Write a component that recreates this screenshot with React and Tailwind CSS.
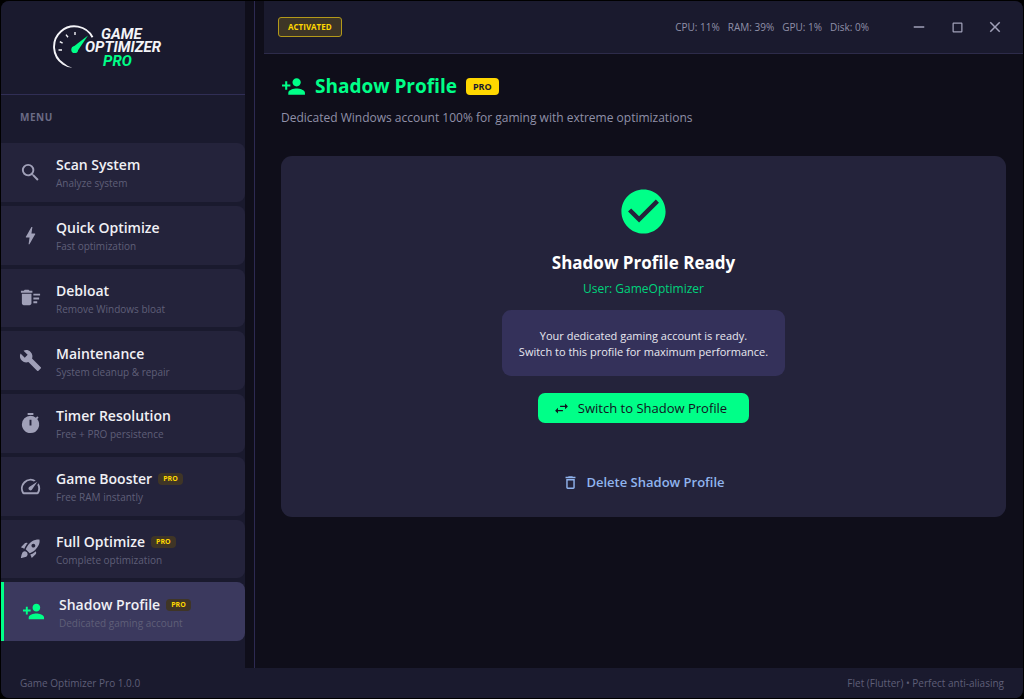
import React from 'react';
import {
    MdBolt,
    MdBuild,
    MdCheckCircle,
    MdClose,
    MdCropSquare,
    MdDeleteOutline,
    MdDeleteSweep,
    MdPersonAdd,
    MdRemove,
    MdRocketLaunch,
    MdSearch,
    MdSpeed,
    MdSwapHoriz,
    MdTimer,
} from 'react-icons/md';

const MENU_ITEMS = [
    { id: 'scan', icon: MdSearch, title: 'Scan System', subtitle: 'Analyze system' },
    { id: 'quick', icon: MdBolt, title: 'Quick Optimize', subtitle: 'Fast optimization' },
    { id: 'debloat', icon: MdDeleteSweep, title: 'Debloat', subtitle: 'Remove Windows bloat' },
    { id: 'maintenance', icon: MdBuild, title: 'Maintenance', subtitle: 'System cleanup & repair' },
    { id: 'timer', icon: MdTimer, title: 'Timer Resolution', subtitle: 'Free + PRO persistence' },
    { id: 'booster', icon: MdSpeed, title: 'Game Booster', subtitle: 'Free RAM instantly', pro: true },
    { id: 'full', icon: MdRocketLaunch, title: 'Full Optimize', subtitle: 'Complete optimization', pro: true },
    { id: 'shadow', icon: MdPersonAdd, title: 'Shadow Profile', subtitle: 'Dedicated gaming account', pro: true },
];

const STATS = ['CPU: 11%', 'RAM: 39%', 'GPU: 1%', 'Disk: 0%'];

function Logo() {
    return (
        <svg viewBox="0 0 114 48" className="w-[114px] h-12" role="img" aria-label="Game Optimizer Pro">
            {/* gauge ring, thinner in its last stretch */}
            <path d="M40.5 13.2 A20.4 20.4 0 1 0 11 39.6" fill="none" stroke="#f4f4f8" strokeWidth="1.9" />
            <path d="M10.4 40.4 A21.3 21.3 0 0 0 20.5 43.8 A20 20 0 0 1 11.5 38.8 Z" fill="#f4f4f8" />
            <path d="M6.5 26 H10 M7.8 17.6 L10.6 19.2 M14 10.6 L16 13.2 M23 8 V11" stroke="#f4f4f8" strokeWidth="1.4" />
            <path d="M36 11.5 L25.5 27 L21 23 Z" fill="#00ff88" />
            <circle cx="22.7" cy="25.7" r="3.4" fill="#00ff88" />
            <g fontFamily="Roboto, sans-serif" fontWeight="700" fontStyle="italic" fontSize="15">
                <text x="49" y="14.5" fill="#f4f4f8">GAME</text>
                <text x="33" y="28" fill="#f4f4f8">OPTIMIZER</text>
                <text x="51" y="42" fill="#00ff88">PRO</text>
            </g>
        </svg>
    );
}

function MenuItem({ item, active, onSelect }) {
    const Icon = item.icon;
    return (
        <button
            onClick={() => onSelect(item.id)}
            className={`flex flex-1 items-center gap-[14px] pl-[18px] rounded-r-lg text-left ${active
                ? 'bg-[#3b395e] border-l-[3px] border-[#00ff88]'
                : 'bg-[#24233b] hover:bg-[#2b2a45]'
                }`}
        >
            <Icon size={23} className={`shrink-0 ${active ? 'text-[#00ff88]' : 'text-[#a0a0b8]'}`} />
            <span className="flex flex-col pt-0.5">
                <span className="flex items-center gap-1.5">
                    <span className="text-sm leading-5 font-semibold text-[#f0f0f5]">{item.title}</span>
                    {item.pro && (
                        <span className="px-[5px] rounded-sm bg-[#3f3526] text-[7px] leading-3 font-bold text-[#ffd700]">PRO</span>
                    )}
                </span>
                <span className="text-[10px] leading-4 text-[#5f5f78]">{item.subtitle}</span>
            </span>
        </button>
    );
}

function Sidebar({ current, onSelect }) {
    return (
        <aside className="flex flex-col w-[244px] shrink-0 bg-[#1a1a2e]">
            <div className="flex justify-center pt-[23px] pr-7 h-[94px] shrink-0 border-b border-[#302e55]">
                <Logo />
            </div>
            <h2 className="pl-[19px] pt-[14px] pb-[18px] text-[10px] leading-4 font-bold tracking-wider text-[#6b6b85]">MENU</h2>
            <nav className="flex flex-col flex-1 gap-1 pb-[27px]">
                {MENU_ITEMS.map((item) => (
                    <MenuItem key={item.id} item={item} active={item.id === current} onSelect={onSelect} />
                ))}
            </nav>
        </aside>
    );
}

function TitleBar() {
    return (
        <header className="flex items-center justify-between h-[53px] shrink-0 pl-[14px] pr-[19px] bg-[#1a1a2e] border-b border-[#2d2b4a]">
            <span className="px-[9px] rounded-[3px] border border-[#b3991a] bg-[#3d3526] text-[8px] leading-[18px] font-bold text-[#ffd700]">
                ACTIVATED
            </span>
            <div className="flex items-center">
                <div className="flex gap-2 mr-[41px] text-[10px] leading-4 text-[#9090a8]">
                    {STATS.map((stat) => (
                        <span key={stat}>{stat}</span>
                    ))}
                </div>
                <div className="flex gap-5 text-[#a0a0b8]">
                    <button aria-label="Minimize" className="flex justify-center w-[18px]"><MdRemove size={18} /></button>
                    <button aria-label="Maximize" className="flex justify-center items-center w-[18px]"><MdCropSquare size={15} /></button>
                    <button aria-label="Close" className="flex justify-center w-[18px]"><MdClose size={18} /></button>
                </div>
            </div>
        </header>
    );
}

function ShadowProfile() {
    return (
        <main className="flex-1 px-[17px] pt-[18px]">
            <div className="flex items-center gap-[9px]">
                <MdPersonAdd size={25} className="text-[#00ff88]" />
                <h1 className="text-[19px] leading-7 font-bold text-[#00ff88]">Shadow Profile</h1>
                <span className="px-[7px] rounded bg-[#ffd700] text-[9px] leading-[17px] font-bold text-[#1a1a2e]">PRO</span>
            </div>
            <p className="mt-[10px] text-xs leading-4 text-[#9090a8]">
                Dedicated Windows account 100% for gaming with extreme optimizations
            </p>
            <section className="flex flex-col items-center mt-[30px] pt-[29px] pb-5 rounded-[11px] bg-[#24233b]">
                <MdCheckCircle size={53} className="text-[#00ff88]" />
                <h2 className="mt-[13px] text-[17px] leading-6 font-bold text-white">Shadow Profile Ready</h2>
                <p className="mt-[6px] text-xs leading-4 text-[#00d47c]">User: GameOptimizer</p>
                <p className="mt-[13px] px-[17px] pt-[18px] pb-4 rounded-[9px] bg-[#34315a] text-[11px] leading-4 text-center text-[#e8e8f0]">
                    Your dedicated gaming account is ready.
                    <br />
                    Switch to this profile for maximum performance.
                </p>
                <button className="flex items-center gap-2 mt-[17px] pl-[15px] pr-[22px] h-[30px] rounded-[7px] bg-[#00ff88] text-[13px] leading-5 font-medium text-[#12121f]">
                    <MdSwapHoriz size={17} />
                    Switch to Shadow Profile
                </button>
                <button className="flex items-center gap-[7px] mt-11 h-[30px] text-[13px] leading-5 font-semibold text-[#90b4ee]">
                    <MdDeleteOutline size={17} />
                    Delete Shadow Profile
                </button>
            </section>
        </main>
    );
}

export default function App() {
    const [current, setCurrent] = React.useState('shadow');

    return (
        <div className="flex min-h-screen p-px bg-black font-['Open_Sans','Noto_Sans',sans-serif]">
            <div className="flex flex-col flex-1 rounded-lg overflow-hidden bg-[#0f0e1a]">
                <div className="flex flex-1">
                    <Sidebar current={current} onSelect={setCurrent} />
                    <div className="w-[9px] shrink-0" />
                    <div className="w-px shrink-0 bg-[#2d2a52]" />
                    <div className="flex flex-col flex-1 ml-[9px]">
                        <TitleBar />
                        <ShadowProfile />
                    </div>
                </div>
                <footer className="flex items-center justify-between h-[30px] shrink-0 px-[19px] bg-[#1a1a2e] text-[10px] leading-4 text-[#5f5f78]">
                    <span>Game Optimizer Pro 1.0.0</span>
                    <span>Flet (Flutter) • Perfect anti-aliasing</span>
                </footer>
            </div>
        </div>
    );
}
